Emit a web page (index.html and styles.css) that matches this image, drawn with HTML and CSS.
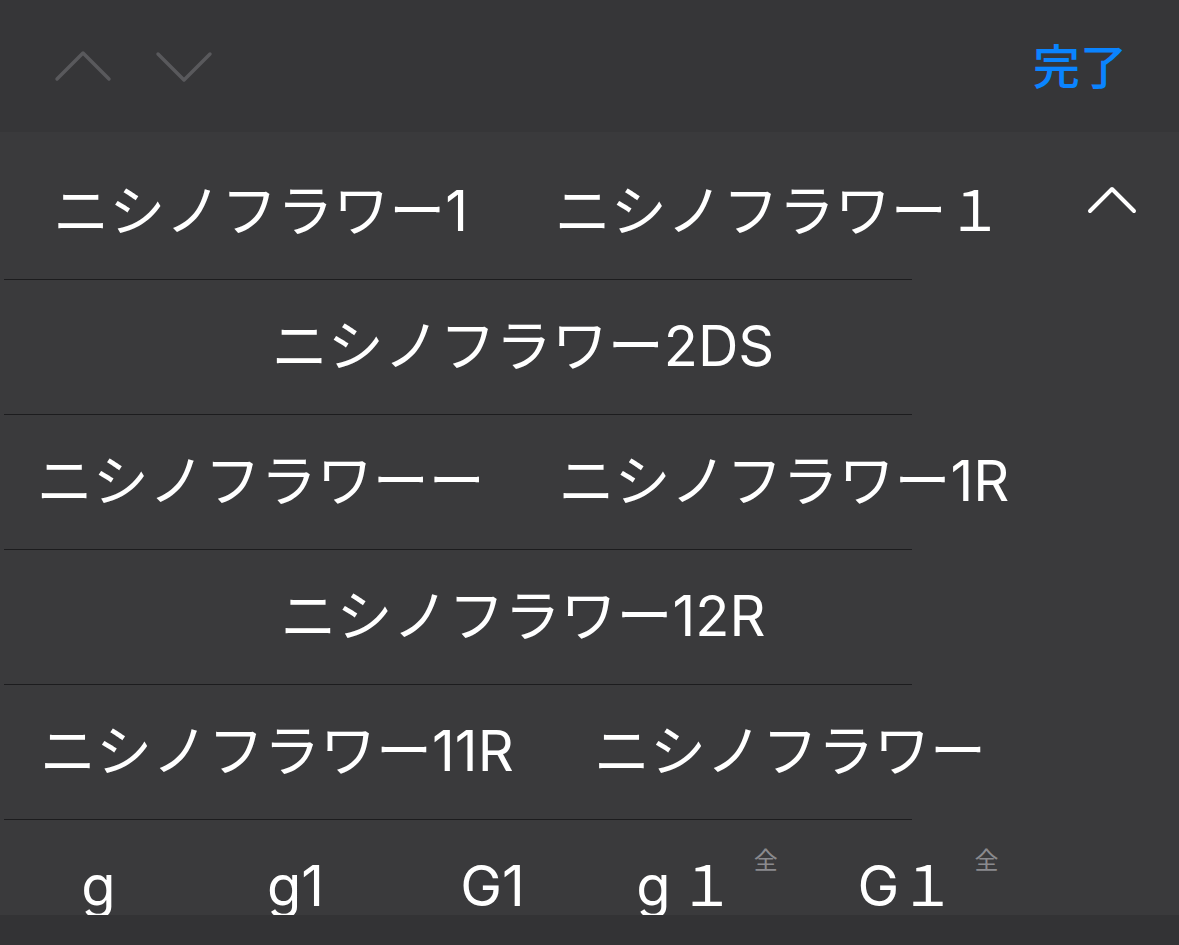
FILE: index.html
```html
<!DOCTYPE html>
<html lang="ja">
<head>
<meta charset="utf-8">
<link rel="stylesheet" href="styles.css">
</head>
<body>
<div class="screen">
  <header class="topbar">
    <div class="nav">
      <svg class="nav-chev" width="60" height="36" viewBox="0 0 60 36"><path d="M4 31 L30 5 L56 31" fill="none" stroke="#59595c" stroke-width="3.5" stroke-linecap="round" stroke-linejoin="round"/></svg>
      <svg class="nav-chev down" width="60" height="36" viewBox="0 0 60 36"><path d="M4 5 L30 31 L56 5" fill="none" stroke="#59595c" stroke-width="3.5" stroke-linecap="round" stroke-linejoin="round"/></svg>
    </div>
    <div class="done">完了</div>
  </header>
  <main class="main">
    <section class="candidates">
      <div class="row first">
        <div class="cell">ニシノフラワー1</div>
        <div class="cell">ニシノフラワー１</div>
      </div>
      <div class="sep"></div>
      <div class="row">
        <div class="cell">ニシノフラワー2DS</div>
      </div>
      <div class="sep"></div>
      <div class="row">
        <div class="cell">ニシノフラワーー</div>
        <div class="cell">ニシノフラワー1R</div>
      </div>
      <div class="sep"></div>
      <div class="row">
        <div class="cell">ニシノフラワー12R</div>
      </div>
      <div class="sep"></div>
      <div class="row tight">
        <div class="cell">ニシノフラワー11R</div>
        <div class="cell">ニシノフラワー</div>
      </div>
      <div class="sep"></div>
      <div class="row">
        <div class="cell fixed">g</div>
        <div class="cell fixed">g1</div>
        <div class="cell fixed">G1</div>
        <div class="cell fixed shift"><span class="txt">g<span class="gap"></span>１<span class="zen">全</span></span></div>
        <div class="cell fixed wide"><span class="txt">G１<span class="zen">全</span></span></div>
      </div>
    </section>
    <aside class="side">
      <svg class="collapse" width="52" height="32" viewBox="0 0 52 32"><path d="M4 27 L26 5 L48 27" fill="none" stroke="#ffffff" stroke-width="4" stroke-linecap="round" stroke-linejoin="round"/></svg>
    </aside>
  </main>
  <footer class="bottom"></footer>
</div>
</body>
</html>
```

FILE: styles.css
```css
* { box-sizing: border-box; }
html, body {
  margin: 0;
  padding: 0;
  background: #3a3a3c;
}
.screen {
  width: 1179px;
  height: 945px;
  display: flex;
  flex-direction: column;
  overflow: hidden;
  font-family: Inter, "Noto Sans CJK JP", sans-serif;
  color: #ffffff;
}
.topbar {
  height: 132px;
  flex: 0 0 132px;
  background: #363638;
  display: flex;
  align-items: center;
  justify-content: space-between;
  padding: 0 52px 0 53px;
}
.nav {
  display: flex;
  align-items: center;
  gap: 41px;
}
.nav-chev { display: block; }
.nav-chev.down { margin-top: 2px; }
.done {
  font-family: "Noto Sans CJK JP", sans-serif;
  font-weight: 500;
  font-size: 47px;
  color: #0a84ff;
  line-height: 1;
  margin-top: -5px;
}
.main {
  flex: 0 0 783px;
  height: 783px;
  display: flex;
  overflow: hidden;
  background: #3a3a3c;
}
.candidates {
  width: 1046px;
  flex: 0 0 1046px;
  padding-top: 13px;
}
.row {
  height: 134px;
  display: flex;
  align-items: center;
}
.row.first { padding-left: 10px; }
.row.tight { padding-right: 20px; }
.cell {
  flex: 1 1 auto;
  text-align: center;
  font-size: 56px;
  line-height: 1;
  white-space: nowrap;
  margin-top: -2px;
}
.cell.fixed {
  flex: 0 0 197px;
}
.cell.shift {
  padding-right: 8px;
}
.cell.wide {
  padding-left: 40px;
}
.txt {
  position: relative;
  display: inline-block;
}
.gap {
  display: inline-block;
  width: 8px;
}
.zen {
  position: absolute;
  left: calc(100% + 19px);
  top: -11px;
  font-family: "Noto Sans CJK JP", sans-serif;
  font-size: 24px;
  line-height: 1;
  color: #8a8a8e;
}
.sep {
  width: 908px;
  height: 1px;
  margin-left: 4px;
  background: #1c1c1e;
}
.side {
  flex: 1 1 auto;
  display: flex;
  justify-content: center;
  padding-top: 52px;
  padding-right: 1px;
}
.collapse { display: block; }
.bottom {
  flex: 0 0 30px;
  background: #333335;
}
```
